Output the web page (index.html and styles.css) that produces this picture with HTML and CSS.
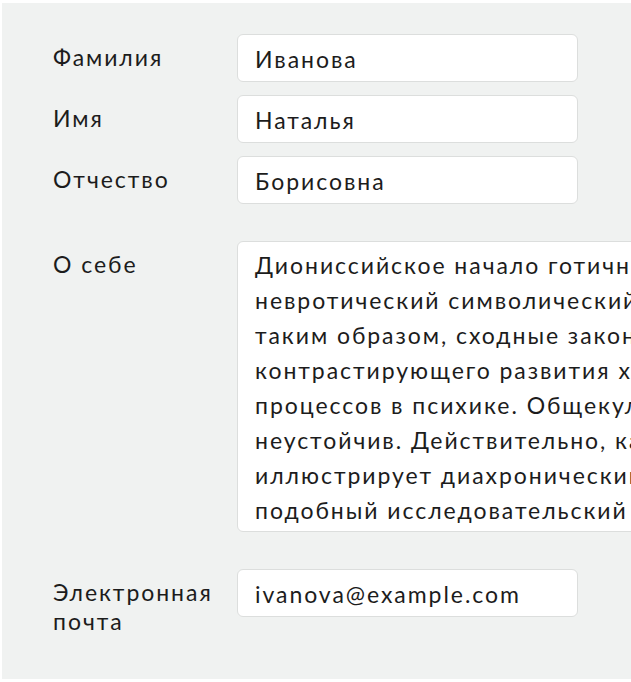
FILE: index.html
```html
<!DOCTYPE html>
<html lang="ru">
<head>
<meta charset="utf-8">
<title>Анкета</title>
<link rel="stylesheet" href="styles.css">
</head>
<body>
<form class="panel">
  <div class="group">
    <div class="row">
      <label class="label" for="f1">Фамилия</label>
      <input class="field" id="f1" type="text" value="Иванова">
    </div>
    <div class="row">
      <label class="label" for="f2">Имя</label>
      <input class="field" id="f2" type="text" value="Наталья">
    </div>
    <div class="row">
      <label class="label" for="f3">Отчество</label>
      <input class="field" id="f3" type="text" value="Борисовна">
    </div>
  </div>
  <div class="group">
    <div class="row">
      <label class="label" for="f4">О себе</label>
      <textarea class="area" id="f4" wrap="off">Диониссийское начало готично иллюстрирует
невротический символический метафоризм,
таким образом, сходные законы
контрастирующего развития характерны
процессов в психике. Общекультурный
неустойчив. Действительно, как
иллюстрирует диахронический подход,
подобный исследовательский</textarea>
    </div>
  </div>
  <div class="group">
    <div class="row">
      <label class="label" for="f5">Электронная почта</label>
      <input class="field" id="f5" type="email" value="ivanova@example.com">
    </div>
  </div>
</form>
</body>
</html>
```

FILE: styles.css
```css
html, body {
  margin: 0;
  padding: 0;
  background: #ffffff;
  overflow: hidden;
}

.panel {
  box-sizing: border-box;
  margin: 3px 0 0 2px;
  width: 700px;
  height: 676px;
  padding: 31px 0 0 51px;
  background: #f0f2f1;
  display: flex;
  flex-direction: column;
  gap: 37px;
  font-family: "Lato", "Open Sans", sans-serif;
  font-size: 23px;
  letter-spacing: 1.95px;
  color: #1c1c1c;
}

.group {
  display: flex;
  flex-direction: column;
  gap: 13px;
}

.row {
  display: grid;
  grid-template-columns: 184px auto;
  align-items: start;
}

.label {
  padding-top: 9px;
  padding-right: 4px;
  line-height: 29px;
}

.field,
.area {
  box-sizing: border-box;
  margin: 0;
  font: inherit;
  letter-spacing: inherit;
  color: inherit;
  background: #ffffff;
  border: 1px solid #dcdedd;
  border-radius: 6px;
  outline: none;
}

.field {
  width: 341px;
  height: 48px;
  padding: 7px 17px 5px;
  line-height: 34px;
}

.area {
  width: 520px;
  height: 291px;
  padding: 6px 17px 2px;
  line-height: 35px;
  resize: none;
  overflow: hidden;
  white-space: pre;
  display: block;
}
```
